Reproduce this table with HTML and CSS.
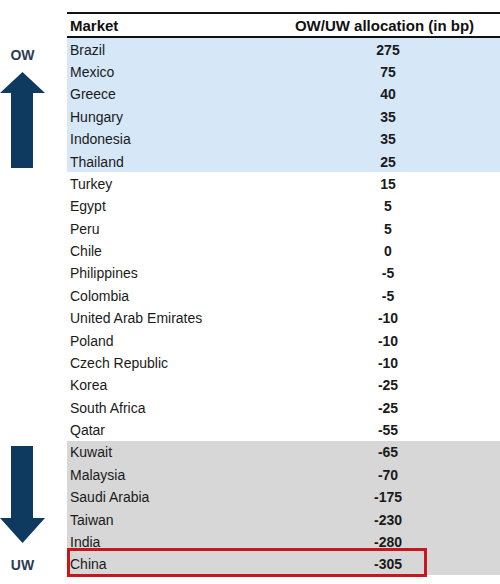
FILE: index.html
```html
<!DOCTYPE html>
<html>
<head>
<meta charset="utf-8">
<link rel="stylesheet" href="styles.css">
</head>
<body>
<div class="page">
  <div class="side">
    <div class="label label-ow">OW</div>
    <svg class="arrow arrow-up" width="45" height="96" viewBox="0 0 45 96"><polygon points="22.5,0 45,21 33,21 33,96 11,96 11,21 0,21" fill="#0f3a60"/></svg>
    <div class="spacer"></div>
    <svg class="arrow arrow-down" width="45" height="97" viewBox="0 0 45 97"><polygon points="11,0 33,0 33,72 45,72 22.5,97 0,72 11,72" fill="#0f3a60"/></svg>
    <div class="label label-uw">UW</div>
  </div>
  <div class="table">
    <div class="row head"><div class="c1">Market</div><div class="c2">OW/UW allocation (in bp)</div></div>
    <div class="row ow"><div class="c1">Brazil</div><div class="c2">275</div></div>
    <div class="row ow"><div class="c1">Mexico</div><div class="c2">75</div></div>
    <div class="row ow"><div class="c1">Greece</div><div class="c2">40</div></div>
    <div class="row ow"><div class="c1">Hungary</div><div class="c2">35</div></div>
    <div class="row ow"><div class="c1">Indonesia</div><div class="c2">35</div></div>
    <div class="row ow"><div class="c1">Thailand</div><div class="c2">25</div></div>
    <div class="row"><div class="c1">Turkey</div><div class="c2">15</div></div>
    <div class="row"><div class="c1">Egypt</div><div class="c2">5</div></div>
    <div class="row"><div class="c1">Peru</div><div class="c2">5</div></div>
    <div class="row"><div class="c1">Chile</div><div class="c2">0</div></div>
    <div class="row"><div class="c1">Philippines</div><div class="c2">-5</div></div>
    <div class="row"><div class="c1">Colombia</div><div class="c2">-5</div></div>
    <div class="row"><div class="c1">United Arab Emirates</div><div class="c2">-10</div></div>
    <div class="row"><div class="c1">Poland</div><div class="c2">-10</div></div>
    <div class="row"><div class="c1">Czech Republic</div><div class="c2">-10</div></div>
    <div class="row"><div class="c1">Korea</div><div class="c2">-25</div></div>
    <div class="row"><div class="c1">South Africa</div><div class="c2">-25</div></div>
    <div class="row"><div class="c1">Qatar</div><div class="c2">-55</div></div>
    <div class="row uw"><div class="c1">Kuwait</div><div class="c2">-65</div></div>
    <div class="row uw"><div class="c1">Malaysia</div><div class="c2">-70</div></div>
    <div class="row uw"><div class="c1">Saudi Arabia</div><div class="c2">-175</div></div>
    <div class="row uw"><div class="c1">Taiwan</div><div class="c2">-230</div></div>
    <div class="row uw"><div class="c1">India</div><div class="c2">-280</div></div>
    <div class="row uw hl"><div class="c1">China</div><div class="c2">-305</div><div class="box"></div></div>
  </div>
</div>
</body>
</html>
```
FILE: styles.css
```css
html, body {
  margin: 0;
  padding: 0;
  background: #fff;
}
body {
  font-family: "Liberation Sans", Arial, sans-serif;
  color: #1a1a1a;
}
.page {
  display: flex;
  width: 500px;
  height: 584px;
  padding-top: 12px;
  box-sizing: border-box;
}
.side {
  width: 67px;
  flex: none;
  display: flex;
  flex-direction: column;
  align-items: flex-start;
  padding-top: 34px;
  box-sizing: border-box;
}
.label {
  width: 45px;
  text-align: center;
  font-weight: bold;
  font-size: 14px;
  line-height: 18px;
  color: #2a3d55;
}
.label-ow {
  margin-bottom: 8px;
}
.arrow {
  display: block;
}
.spacer {
  flex: 1;
}
.label-uw {
  margin-top: 13px;
  margin-bottom: 10px;
}
.table {
  flex: 1;
  display: flex;
  flex-direction: column;
}
.row {
  position: relative;
  display: flex;
  height: 22.375px;
  align-items: center;
  font-size: 14px;
  padding-top: 1px;
  box-sizing: border-box;
}
.row.head {
  height: 26px;
  padding-top: 0;
  border-top: 2px solid #111;
  border-bottom: 2px solid #111;
  font-size: 15px;
  font-weight: bold;
  color: #111;
}
.c1 {
  width: 210px;
  padding-left: 3px;
  box-sizing: border-box;
}
.c2 {
  flex: 1;
  text-align: center;
  font-weight: bold;
  padding-right: 1px;
}
.head .c2 {
  padding-right: 8px;
}
.ow {
  background: #d6e8f8;
}
.uw {
  background: #d7d7d7;
}
.box {
  position: absolute;
  left: 0;
  top: -5px;
  width: 360px;
  bottom: -2px;
  border: 3px solid #c8161d;
  box-sizing: border-box;
}
```
